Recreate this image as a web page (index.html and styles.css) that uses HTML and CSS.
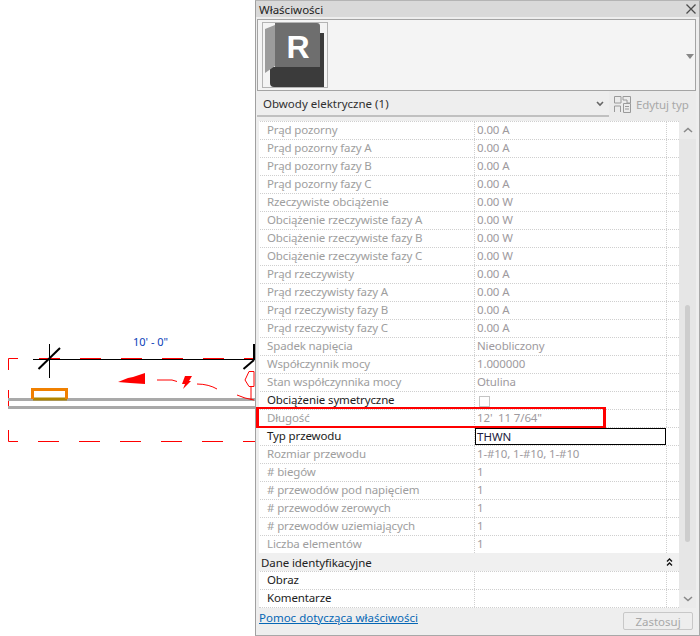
FILE: index.html
```html
<!DOCTYPE html>
<html lang="pl">
<head>
<meta charset="utf-8">
<title>Właściwości</title>
<link rel="stylesheet" href="styles.css">
</head>
<body>
<div class="app">
  <div class="canvas">
    <div class="dim">10' - 0"</div>
    <svg class="drawing" width="255" height="636" viewBox="0 0 255 636">
      <path d="M8.500 370V358.500H18M39 358.500H60M80 358.500H101M121 358.500H142M162 358.500H183M203 358.500H224M244 358.500H255" class="dash"/>
      <path d="M8.500 430V441.500H18M38 441.500H59M79 441.500H100M120 441.500H141M161 441.500H182M202 441.500H223M243 441.500H255" class="dash"/>
      <path d="M8.500 390V409" class="dash"/>
      <path d="M33 359.500H255" class="black"/>
      <path d="M49.500 344V378" class="black"/>
      <path d="M38.500 369L60 348" class="black thick"/>
      <path d="M243.500 369L254 360" class="black thick"/>
      <path d="M254 344V360" class="black thick"/>
      <rect x="8" y="398" width="247" height="3" class="wire"/>
      <rect x="8" y="406" width="247" height="3" class="wire"/>
      <path d="M33 399H67" class="oliveline"/>
      <path d="M32.500 399V389.500H66.500V399" class="orange"/>
      <path d="M118 382L128 378L133 377L145 373V384L130 383Z" class="fill"/>
      <path d="M185 376H192L189 381H191L183 389L185 384H182Z" class="fill"/>
      <path d="M157 380H172L177 381.500M197 384C205 384 212 386 217 389M237 395L245 398L254 400" class="thin"/>
      <path d="M254 371.500H249L245 380L249 386.500H254M251 387V400M254 371.500V386.500" class="thin"/>
    </svg>
  </div>
  <section class="panel">
    <header class="titlebar">
      <span class="title">Właściwości</span>
      <svg class="close" width="10" height="10" viewBox="0 0 10 10"><path d="M0.500 0.500L9.500 9.500M9.500 0.500L0.500 9.500"/></svg>
    </header>
    <div class="preview">
      <div class="thumb">
        <svg width="64" height="64" viewBox="0 0 64 64">
          <path d="M7 44H61V64H11Q7 64 7 60Z" class="logo-dark"/>
          <path d="M57 10H61V44H57Z" class="logo-dark"/>
          <path d="M12 0H54Q57 0 57 3V44H12Z" class="logo-mid"/>
          <path d="M12 2L2 6V50L12 43Z" class="logo-light"/>
          <text x="35" y="35" class="logo-r">R</text>
        </svg>
      </div>
      <svg class="preview-arrow" width="8" height="5" viewBox="0 0 8 5"><path d="M0 0H8L4 5Z"/></svg>
    </div>
    <div class="selector">
      <div class="combo">
        <span>Obwody elektryczne (1)</span>
        <svg class="chev" width="8" height="6" viewBox="0 0 8 6"><path d="M1 1L4 4L7 1"/></svg>
      </div>
      <div class="edit">
        <svg width="17" height="17" viewBox="0 0 17 17" class="edit-icon">
          <path d="M0.500 7V0.500H7V7ZM0.500 16V10H6.500V16M9 0.500H16.500V7H13V4H9Z"/>
          <path d="M9.500 7.500H16.500V16.500H9.500ZM11 10.500H15M11 13H15"/>
        </svg>
        <span>Edytuj typ</span>
      </div>
    </div>
    <div class="body">
      <div class="table">
        <div class="row off"><span class="k">Prąd pozorny</span><span class="v">0.00 A</span><span class="e"></span></div>
        <div class="row off"><span class="k">Prąd pozorny fazy A</span><span class="v">0.00 A</span><span class="e"></span></div>
        <div class="row off"><span class="k">Prąd pozorny fazy B</span><span class="v">0.00 A</span><span class="e"></span></div>
        <div class="row off"><span class="k">Prąd pozorny fazy C</span><span class="v">0.00 A</span><span class="e"></span></div>
        <div class="row off"><span class="k">Rzeczywiste obciążenie</span><span class="v">0.00 W</span><span class="e"></span></div>
        <div class="row off"><span class="k">Obciążenie rzeczywiste fazy A</span><span class="v">0.00 W</span><span class="e"></span></div>
        <div class="row off"><span class="k">Obciążenie rzeczywiste fazy B</span><span class="v">0.00 W</span><span class="e"></span></div>
        <div class="row off"><span class="k">Obciążenie rzeczywiste fazy C</span><span class="v">0.00 W</span><span class="e"></span></div>
        <div class="row off"><span class="k">Prąd rzeczywisty</span><span class="v">0.00 A</span><span class="e"></span></div>
        <div class="row off"><span class="k">Prąd rzeczywisty fazy A</span><span class="v">0.00 A</span><span class="e"></span></div>
        <div class="row off"><span class="k">Prąd rzeczywisty fazy B</span><span class="v">0.00 A</span><span class="e"></span></div>
        <div class="row off"><span class="k">Prąd rzeczywisty fazy C</span><span class="v">0.00 A</span><span class="e"></span></div>
        <div class="row off"><span class="k">Spadek napięcia</span><span class="v">Nieobliczony</span><span class="e"></span></div>
        <div class="row off"><span class="k">Współczynnik mocy</span><span class="v">1.000000</span><span class="e"></span></div>
        <div class="row off"><span class="k">Stan współczynnika mocy</span><span class="v">Otulina</span><span class="e"></span></div>
        <div class="row"><span class="k">Obciążenie symetryczne</span><span class="v"><i class="check"></i></span><span class="e"></span></div>
        <div class="row off"><span class="k">Długość</span><span class="v">12'&nbsp; 11 7/64"</span><span class="e"></span></div>
        <div class="row"><span class="k">Typ przewodu</span><span class="input">THWN</span></div>
        <div class="row off"><span class="k">Rozmiar przewodu</span><span class="v">1-#10, 1-#10, 1-#10</span><span class="e"></span></div>
        <div class="row off"><span class="k"># biegów</span><span class="v">1</span><span class="e"></span></div>
        <div class="row off"><span class="k"># przewodów pod napięciem</span><span class="v">1</span><span class="e"></span></div>
        <div class="row off"><span class="k"># przewodów zerowych</span><span class="v">1</span><span class="e"></span></div>
        <div class="row off"><span class="k"># przewodów uziemiających</span><span class="v">1</span><span class="e"></span></div>
        <div class="row off"><span class="k">Liczba elementów</span><span class="v">1</span><span class="e"></span></div>
        <div class="group"><span>Dane identyfikacyjne</span>
          <svg width="7" height="8" viewBox="0 0 7 8"><path d="M1 3.500L3.500 1L6 3.500M1 7.500L3.500 5L6 7.500"/></svg>
        </div>
        <div class="row"><span class="k">Obraz</span><span class="v"></span><span class="e"></span></div>
        <div class="row"><span class="k">Komentarze</span><span class="v"></span><span class="e"></span></div>
      </div>
      <div class="scrollbar">
        <div class="sb-btn"><svg width="10" height="6" viewBox="0 0 10 6"><path d="M1 5L5 1.500L9 5"/></svg></div>
        <div class="sb-track"><div class="sb-thumb"></div></div>
        <div class="sb-btn"><svg width="10" height="6" viewBox="0 0 10 6"><path d="M1 1L5 4.500L9 1"/></svg></div>
      </div>
    </div>
    <footer class="footer">
      <a class="help" href="#">Pomoc dotycząca właściwości</a>
      <button class="apply" type="button">Zastosuj</button>
    </footer>
    <div class="highlight"></div>
  </section>
</div>
</body>
</html>
```
FILE: styles.css
```css
* { box-sizing: border-box; }
html, body { margin: 0; padding: 0; background: #fff; }
body { width: 700px; height: 636px; overflow: hidden; font-family: "Noto Sans", "Open Sans", sans-serif; font-size: 11.5px; color: #1c1c1c; }
.app { display: flex; width: 700px; height: 636px; }
.canvas { position: relative; flex: 0 0 255px; background: #fff; }
.dim { position: absolute; left: 133px; top: 334px; font-size: 11px; color: #0a3fb8; }
.drawing { position: absolute; left: 0; top: 0; }
.drawing path { fill: none; }
.drawing .dash { stroke: #f00; stroke-width: 1; }
.drawing .black { stroke: #000; stroke-width: 1; }
.drawing .thick { stroke-width: 2; }
.drawing .wire { fill: #a9a9a9; }
.drawing .orange { stroke: #f08000; stroke-width: 3; }
.drawing .oliveline { stroke: #b08500; stroke-width: 3; }
.drawing .fill { fill: #f00; }
.drawing .thin { stroke: #f00; stroke-width: 1; }
.panel { position: relative; flex: 1; display: flex; flex-direction: column; background: #eee; border-left: 1px solid #a0a0a0; border-top: 1px solid #b4b4b4; border-right: 1px solid #a8a8a8; border-bottom: 1px solid #a8a8a8; }
.titlebar { flex: 0 0 16px; display: flex; align-items: center; justify-content: space-between; padding: 0 3px; background: #d9d9d9; }
.title { color: #222; }
.close path { stroke: #4c4c4c; stroke-width: 1.300; fill: none; }
.preview { flex: 0 0 72px; margin: 2px 3px 0 1px; border: 1px solid #a4a4a4; background: #f4f4f4; padding: 2px 4px; position: relative; }
.thumb { width: 66px; height: 66px; border: 1px solid #b4b4b4; background: #f4f4f4; }
.thumb svg { display: block; }
.logo-dark { fill: #3b3b3b; }
.logo-mid { fill: #6e6e6e; }
.logo-light { fill: #9c9c9c; }
.logo-r { fill: #fff; font-family: "Liberation Sans", sans-serif; font-weight: 700; font-size: 32px; text-anchor: middle; }
.preview-arrow { position: absolute; right: 1px; top: 34px; fill: #888; }
.selector { flex: 0 0 30px; display: flex; margin-right: 3px; }
.combo { flex: 0 0 352px; height: 26px; margin-left: 1px; padding: 1px 5px 0 6px; display: flex; align-items: center; justify-content: space-between; border-bottom: 2px solid #c0c0c0; color: #303030; }
.chev { fill: none; stroke: #666; stroke-width: 1.600; }
.edit { flex: 1; display: flex; align-items: center; gap: 5px; padding: 0 0 4px 5px; color: #a8a8a8; background: #ebebeb; letter-spacing: -0.1px; }
.edit-icon { fill: none; stroke: #9a9a9a; stroke-width: 1; }
.body { flex: 0 0 486px; display: flex; padding-left: 3px; margin-right: 3px; }
.table { flex: 0 0 420px; background: #fff; border-bottom: 1px dotted #cfcfcf; }
.row { display: flex; height: 18px; align-items: stretch; background-image: linear-gradient(to right, #cfcfcf 50%, transparent 50%); background-size: 2px 1px; background-repeat: repeat-x; background-position: top; }
.k { flex: 0 0 216px; padding-left: 8px; line-height: 17px; border-right: 1px dotted #cfcfcf; white-space: nowrap; letter-spacing: -0.13px; }
.v { flex: 0 0 192px; padding-left: 2px; line-height: 17px; border-right: 1px dotted #cfcfcf; white-space: nowrap; letter-spacing: -0.13px; }
.e { flex: 1; }
.off .k { color: #9e9e9e; }
.off .v { color: #9e9a9e; }
.input { flex: 0 0 191px; height: 17px; margin-top: 1px; border: 1px solid #000; line-height: 15px; padding-left: 1px; color: #1c1c40; background: #fff; }
.check { display: block; width: 11px; height: 11px; border: 1px solid #c4c4c4; background: #fff; margin: 5px 0 0 2px; }
.group { height: 18px; display: flex; align-items: center; justify-content: space-between; background: #f0f0f0; padding: 0 6px 0 2px; color: #222; letter-spacing: -0.1px; }
.group svg { fill: none; stroke: #111; stroke-width: 1.300; }
.scrollbar { flex: 0 0 17px; display: flex; flex-direction: column; background: #e8e8e8; }
.sb-btn { flex: 0 0 18px; display: flex; align-items: center; justify-content: center; background: #ebebeb; }
.sb-btn svg { fill: none; stroke: #8a8a8a; stroke-width: 1.600; }
.sb-track { flex: 1; padding-top: 166px; display: flex; justify-content: center; background: #e6e6e6; }
.sb-thumb { width: 5px; height: 237px; background: #cdcdcd; border-radius: 3px; }
.footer { flex: 1; display: flex; align-items: flex-start; justify-content: space-between; padding: 0 6px 0 3px; }
.help { color: #0667b5; text-decoration: underline; line-height: 18px; margin-top: 1px; }
.apply { width: 70px; height: 18px; margin: 4px 0 0 0; padding: 0; font: inherit; color: #a8a8a8; background: #eee; border: 1px solid #c8c8c8; border-radius: 2px; }
.highlight { position: absolute; left: 0; top: 406px; width: 350px; height: 21px; border: solid #f00; border-width: 2px 3px; pointer-events: none; }
```
